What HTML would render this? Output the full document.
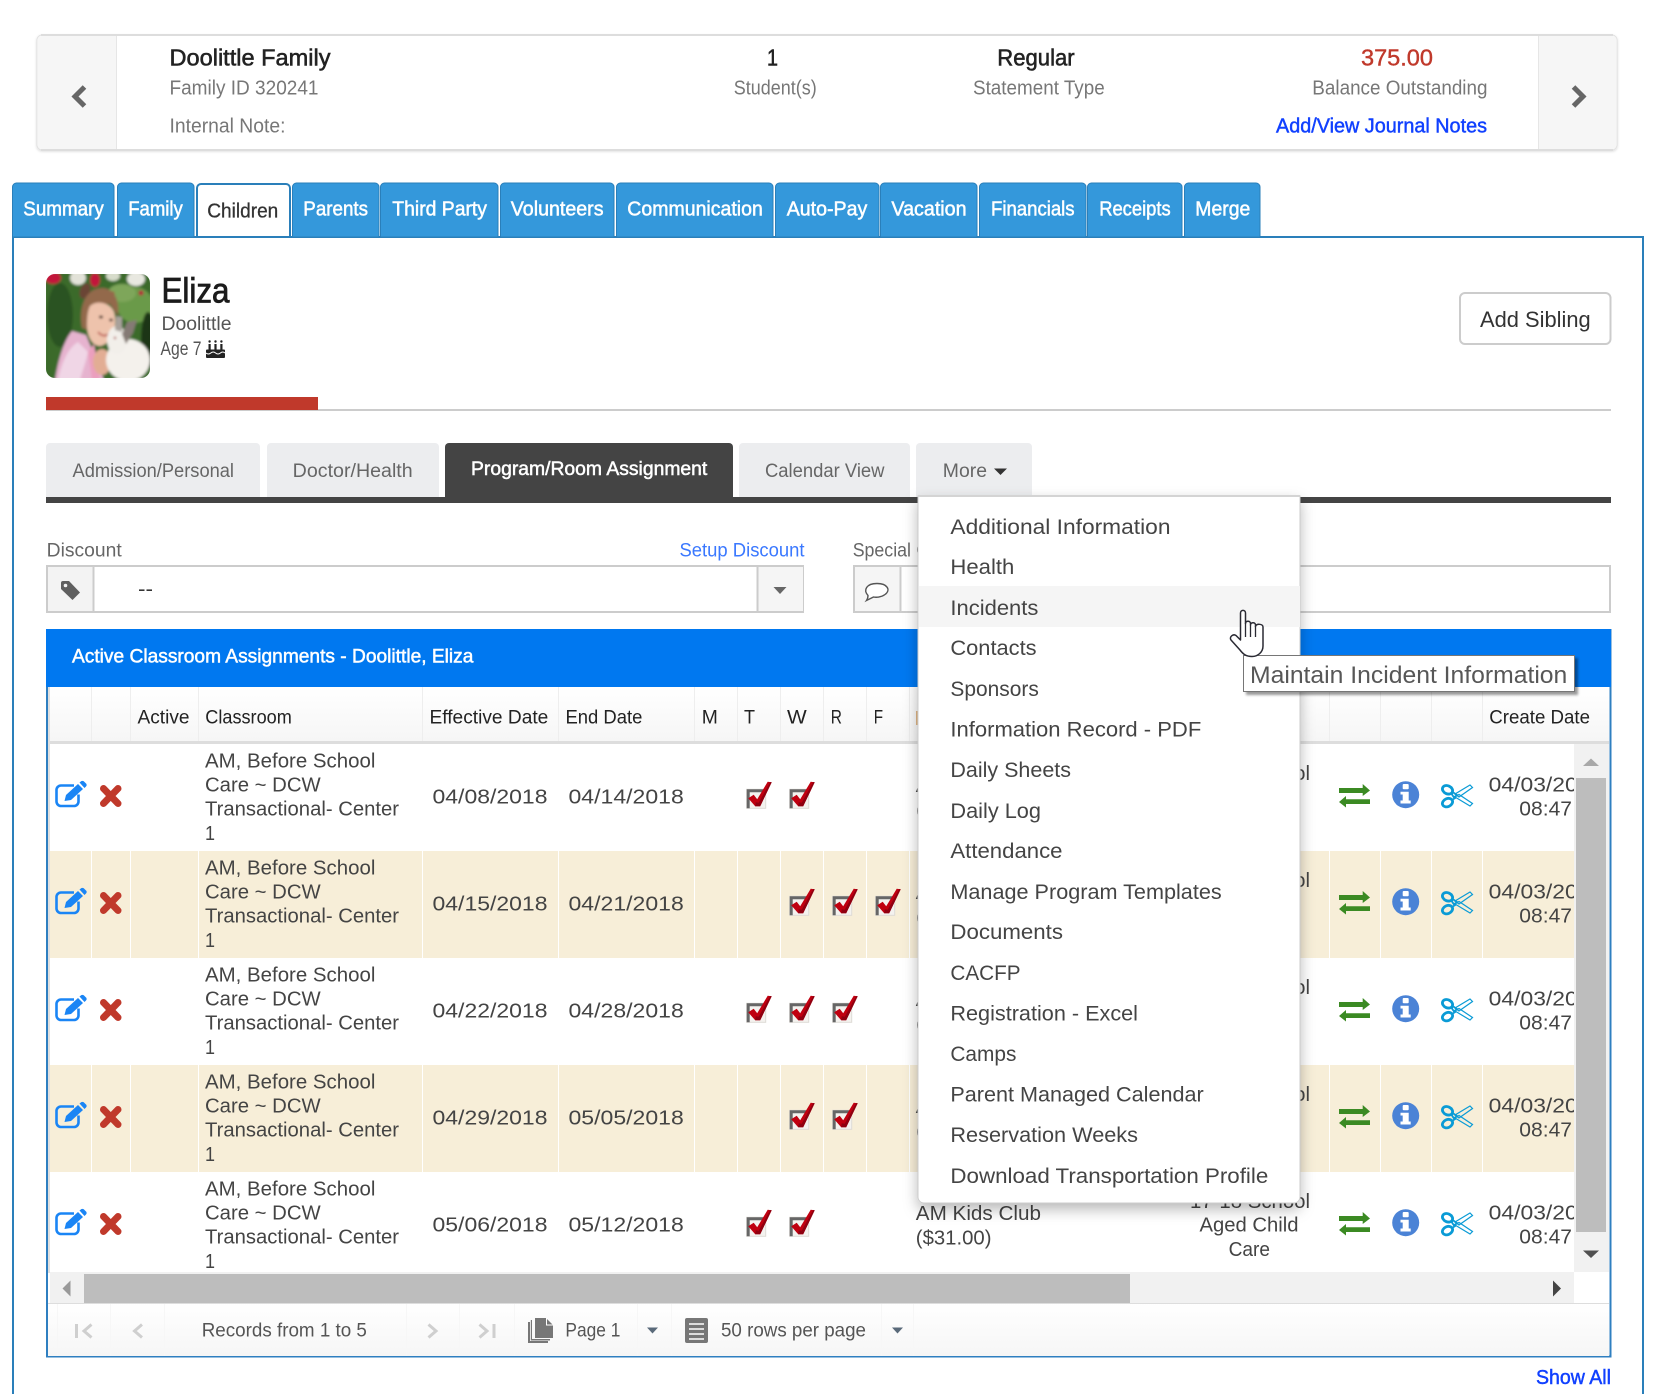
<!DOCTYPE html>
<html lang="en"><head><meta charset="utf-8"><title>Doolittle Family - Children</title>
<style>
html,body{margin:0;padding:0;background:#fff}
svg{display:block}
text{font-family:"Liberation Sans",sans-serif;white-space:pre}
.h1{font-size:23px;fill:#222;stroke:#222;stroke-width:.55}
.sub{font-size:20px;fill:#777}
.tab{font-size:20.5px;fill:#fff;stroke:#fff;stroke-width:.5}
.itab{font-size:19px;fill:#666}
.th{font-size:19px;fill:#222}
.td{font-size:20.5px;fill:#444}
.mi{font-size:21.5px;fill:#444}
.ft{font-size:19.5px;fill:#555}
.lnk{font-size:20px;fill:#1040ff;stroke:#1040ff;stroke-width:.45}
</style></head>
<body>
<svg xmlns="http://www.w3.org/2000/svg" width="1660" height="1394" viewBox="0 0 1660 1394">
<defs>
<clipPath id="av"><rect x="46" y="274" width="104" height="104" rx="9"/></clipPath>
<filter id="bl" x="-10%" y="-10%" width="120%" height="120%"><feGaussianBlur stdDeviation="1.3"/></filter>
<filter id="ms" x="-10%" y="-5%" width="120%" height="110%"><feDropShadow dx="0" dy="6" stdDeviation="7" flood-color="#000" flood-opacity=".28"/></filter>
<filter id="cs" x="-2%" y="-10%" width="104%" height="125%"><feDropShadow dx="0" dy="1" stdDeviation="1.2" flood-color="#000" flood-opacity=".15"/></filter>
<filter id="ts" x="-5%" y="-20%" width="110%" height="150%"><feDropShadow dx="3" dy="3" stdDeviation="1.2" flood-color="#000" flood-opacity=".4"/></filter>
<linearGradient id="hg" x1="0" y1="0" x2="0" y2="1"><stop offset="0" stop-color="#fff"/><stop offset="1" stop-color="#f6f6f6"/></linearGradient>
<g id="chk">
<rect x="0" y="0" width="19" height="19" fill="#f4f2ef" stroke="#dedbd6"/>
<path d="M1.500 19V1.500H19" fill="none" stroke="#666" stroke-width="3"/>
<path d="M1.500 9 7 5.500 10.500 10 21-7.500 25-7 13.500 17 8.500 17Z" fill="#c00010"/>
<path d="M8.500 17 13.500 17 25-7 23.500-7.300 12 13.500 9 13Z" fill="#8f0010"/>
</g>
<g id="edit" transform="translate(0,1.500)">
<path d="M74 784H61a4.500 4.500 0 0 0-4.500 4.500V800a4.500 4.500 0 0 0 4.500 4.500H74a4.500 4.500 0 0 0 4.500-4.500V793" fill="none" stroke="#1a85f5" stroke-width="2.600"/>
<path d="M64.500 799.500 66 793.500 78 782.500 83 787.500 71 798.500Z" fill="#1a85f5"/>
<path d="M79.500 781 81.500 779.500Q83 779 84 780L86.500 782.500Q87 784 86 785L84.500 786.500Z" fill="#1a85f5"/>
</g>
<path id="x" d="M103.500 788.500 118 803.500M118 788.500 103.500 803.500" fill="none" stroke="#c0392b" stroke-width="7" stroke-linecap="round"/>
<g id="arr" fill="#3b8a23">
<path d="M1339 788H1362.700V784L1370 790.500 1362.700 796V793H1339Z"/>
<path d="M1370 799.300H1346V796L1339 802 1346 807.500V804H1370Z"/>
</g>
<g id="info">
<circle cx="1405.700" cy="794.700" r="13.500" fill="#4b83d6"/>
<rect x="1402.700" y="784" width="6" height="5.200" rx="1" fill="#fff"/>
<path d="M1400.500 791.700H1408.700V800.500H1410.700V803.500H1400.500V800.500H1402.700V794.500H1400.500Z" fill="#fff"/>
</g>
<g id="sc" fill="none" stroke="#0a9bd6" transform="translate(1,0)">
<ellipse cx="1446.500" cy="789.800" rx="5.300" ry="4" transform="rotate(25 1446.500 789.800)" stroke-width="2.800"/>
<ellipse cx="1446.500" cy="802.600" rx="5.300" ry="4" transform="rotate(-25 1446.500 802.600)" stroke-width="2.800"/>
<path d="M1451.500 792 1456 795 1453 797.500 1451 794.500ZM1451 800 1455 797.500" stroke-width="1.800"/>
<path d="M1454 794 1469 785 1471.500 787.500 1458 797Z" stroke-width="1.200"/>
<path d="M1454 797 1458 794.500 1471.500 803.500 1469 806Z" stroke-width="1.200"/>
</g>
</defs>

<!-- family card -->
<g filter="url(#cs)">
<rect x="37" y="35" width="1580" height="115" rx="5" fill="#fff" stroke="#e2e2e2" stroke-width="1"/>
</g>
<rect x="41" y="34" width="1572" height="2" fill="#ddd"/>
<rect x="41" y="149" width="1572" height="2" fill="#ddd"/>
<path d="M116 36H41a3 3 0 0 0-3 3V146a3 3 0 0 0 3 3H116Z" fill="#f6f6f6"/>
<path d="M1538 36H1613a3 3 0 0 1 3 3V146a3 3 0 0 1-3 3H1538Z" fill="#f6f6f6"/>
<path d="M116.500 36V149M1538.500 36V149" stroke="#e6e6e6"/>
<path d="M84.500 87 75 96.500 84.500 106" fill="none" stroke="#666" stroke-width="5"/>
<path d="M1573.500 87 1583 96.500 1573.500 106" fill="none" stroke="#666" stroke-width="5"/>
<text class="h1" x="169.500" y="65.700" textLength="161" lengthAdjust="spacingAndGlyphs">Doolittle Family</text>
<text class="sub" x="169.500" y="94.700" textLength="149" lengthAdjust="spacingAndGlyphs">Family ID 320241</text>
<text class="sub" x="169.500" y="132.700" textLength="116" lengthAdjust="spacingAndGlyphs">Internal Note:</text>
<text class="h1" x="767" y="65.700" textLength="11" lengthAdjust="spacingAndGlyphs">1</text>
<text class="sub" x="733.700" y="94.700" textLength="83" lengthAdjust="spacingAndGlyphs">Student(s)</text>
<text class="h1" x="997.300" y="65.700" textLength="77.300" lengthAdjust="spacingAndGlyphs">Regular</text>
<text class="sub" x="973" y="94.700" textLength="131.700" lengthAdjust="spacingAndGlyphs">Statement Type</text>
<text class="h1" x="1361" y="65.700" textLength="72" lengthAdjust="spacingAndGlyphs" style="fill:#c0392b;stroke:#c0392b;stroke-width:.4">375.00</text>
<text class="sub" x="1312.300" y="94.700" textLength="175.200" lengthAdjust="spacingAndGlyphs">Balance Outstanding</text>
<text class="lnk" x="1276" y="132.700" textLength="211" lengthAdjust="spacingAndGlyphs">Add/View Journal Notes</text>

<!-- panel -->
<rect x="13" y="237" width="1630" height="1170" fill="#fff" stroke="#2a7fba" stroke-width="2"/>

<!-- main tabs -->
<g fill="#3498db" stroke="#2a7fba" stroke-width="1">
<path d="M12.500 237V187a4 4 0 0 1 4-4H110a4 4 0 0 1 4 4V237Z"/>
<path d="M117.500 237V187a4 4 0 0 1 4-4H190a4 4 0 0 1 4 4V237Z"/>
<path d="M292.500 237V187a4 4 0 0 1 4-4H375a4 4 0 0 1 4 4V237Z"/>
<path d="M380.500 237V187a4 4 0 0 1 4-4H494a4 4 0 0 1 4 4V237Z"/>
<path d="M500.500 237V187a4 4 0 0 1 4-4H610a4 4 0 0 1 4 4V237Z"/>
<path d="M616.500 237V187a4 4 0 0 1 4-4H769a4 4 0 0 1 4 4V237Z"/>
<path d="M775.500 237V187a4 4 0 0 1 4-4H875a4 4 0 0 1 4 4V237Z"/>
<path d="M880.500 237V187a4 4 0 0 1 4-4H973a4 4 0 0 1 4 4V237Z"/>
<path d="M979.500 237V187a4 4 0 0 1 4-4H1082a4 4 0 0 1 4 4V237Z"/>
<path d="M1087.500 237V187a4 4 0 0 1 4-4H1178a4 4 0 0 1 4 4V237Z"/>
<path d="M1184.500 237V187a4 4 0 0 1 4-4H1256a4 4 0 0 1 4 4V237Z"/>
</g>
<path d="M197 236V188a4 4 0 0 1 4-4H286a4 4 0 0 1 4 4V236" fill="#fff" stroke="#2a7fba" stroke-width="2"/>
<text class="tab" x="23.300" y="215.500" textLength="80.500" lengthAdjust="spacingAndGlyphs">Summary</text>
<text class="tab" x="128.200" y="215.500" textLength="54.600" lengthAdjust="spacingAndGlyphs">Family</text>
<text class="tab" x="207.300" y="217.500" textLength="71" lengthAdjust="spacingAndGlyphs" style="fill:#333;stroke:#333;stroke-width:.3">Children</text>
<text class="tab" x="303.300" y="215.500" textLength="64.700" lengthAdjust="spacingAndGlyphs">Parents</text>
<text class="tab" x="392.300" y="215.500" textLength="94.700" lengthAdjust="spacingAndGlyphs">Third Party</text>
<text class="tab" x="510.800" y="215.500" textLength="92.700" lengthAdjust="spacingAndGlyphs">Volunteers</text>
<text class="tab" x="627.300" y="215.500" textLength="135.500" lengthAdjust="spacingAndGlyphs">Communication</text>
<text class="tab" x="786.700" y="215.500" textLength="80.600" lengthAdjust="spacingAndGlyphs">Auto-Pay</text>
<text class="tab" x="891.400" y="215.500" textLength="75.200" lengthAdjust="spacingAndGlyphs">Vacation</text>
<text class="tab" x="991" y="215.500" textLength="83.600" lengthAdjust="spacingAndGlyphs">Financials</text>
<text class="tab" x="1099.200" y="215.500" textLength="71.500" lengthAdjust="spacingAndGlyphs">Receipts</text>
<text class="tab" x="1195.300" y="215.500" textLength="55" lengthAdjust="spacingAndGlyphs">Merge</text>

<!-- avatar -->
<g clip-path="url(#av)"><g filter="url(#bl)">
<rect x="44" y="272" width="108" height="108" fill="#3a6a2a"/>
<ellipse cx="60" cy="315" rx="13" ry="32" fill="#2c5320"/>
<ellipse cx="135" cy="305" rx="18" ry="18" fill="#6b9a48"/>
<ellipse cx="122" cy="293" rx="14" ry="9" fill="#7ea65a"/>
<ellipse cx="148" cy="340" rx="7" ry="28" fill="#1a3616"/>
<ellipse cx="53" cy="278" rx="8" ry="6" fill="#c2183a"/>
<ellipse cx="95" cy="280" rx="5" ry="7" fill="#c2183a"/>
<ellipse cx="78" cy="278" rx="8" ry="7" fill="#e2e2d8"/>
<ellipse cx="136" cy="279" rx="9" ry="7" fill="#e8e8e0"/>
<ellipse cx="113" cy="276" rx="7" ry="5" fill="#d7dccb"/>
<circle cx="141" cy="293" r="2.500" fill="#b3243a"/>
<circle cx="112" cy="294" r="2.500" fill="#a93a3a"/>
<path d="M55 380C58 360 64 340 72 331L86 335 93 352 104 380Z" fill="#e6b3cf"/>
<path d="M58 380 C62 362 68 348 78 342 L88 352 C86 362 82 372 80 380Z" fill="#f0d6e6"/>
<path d="M88 352 94 344 100 380 92 380Z" fill="#eb9fbe"/>
<ellipse cx="85" cy="291" rx="5" ry="8" fill="#6b4534" transform="rotate(20 85 291)"/>
<path d="M82 328C78 306 86 288 102 288C114 288 120 300 118 316L110 304 92 304 88 330Z" fill="#93694c"/>
<path d="M90 306C96 300 110 302 114 312C118 326 112 344 100 346C92 346 87 336 87 325C87 316 88 310 90 306Z" fill="#eec3ac"/>
<ellipse cx="101" cy="317" rx="2" ry="1.500" fill="#4a3028"/>
<ellipse cx="111" cy="320" rx="1.800" ry="1.500" fill="#4a3028"/>
<path d="M98 332Q103 338 109 334" stroke="#c26a60" stroke-width="2" fill="none"/>
<ellipse cx="102" cy="362" rx="9" ry="13" fill="#e2ad94"/>
<ellipse cx="128" cy="360" rx="22" ry="21" fill="#f4f1ec"/>
<ellipse cx="117" cy="340" rx="10" ry="14" fill="#f2efea"/>
<path d="M122 334 127 322 137 320 133 333 126 344Z" fill="#857a74"/>
<path d="M115 330 116 316 122 317 122 332Z" fill="#a9a19b"/>
<circle cx="115" cy="338" r="1.200" fill="#a44"/>
</g></g>
<text x="161.500" y="302.300" textLength="68" lengthAdjust="spacingAndGlyphs" style="font-size:35px;fill:#1b1b1b;stroke:#1b1b1b;stroke-width:.8">Eliza</text>
<text x="161.500" y="330" textLength="70" lengthAdjust="spacingAndGlyphs" style="font-size:19px;fill:#555">Doolittle</text>
<text x="160.500" y="355" textLength="41" lengthAdjust="spacingAndGlyphs" style="font-size:19px;fill:#555">Age 7</text>
<g fill="#222">
<rect x="206" y="349.500" width="19" height="8.500" rx="1"/>
<rect x="208.500" y="344" width="2.200" height="5.500"/><rect x="214.400" y="344" width="2.200" height="5.500"/><rect x="220.300" y="344" width="2.200" height="5.500"/>
<circle cx="209.600" cy="341.500" r="1.200"/><circle cx="215.500" cy="341.500" r="1.200"/><circle cx="221.400" cy="341.500" r="1.200"/>
</g>
<path d="M206 353q2.400 2 4.800 0t4.800 0 4.800 0 4.600 0" fill="none" stroke="#fff" stroke-width="1"/>

<!-- progress line -->
<rect x="46" y="409" width="1565" height="2" fill="#ccc"/>
<rect x="46" y="397" width="272" height="13" fill="#c0392b"/>

<!-- add sibling -->
<rect x="1460" y="293" width="150.500" height="51" rx="5" fill="#fff" stroke="#ccc" stroke-width="2"/>
<text x="1480" y="327" textLength="110.700" lengthAdjust="spacingAndGlyphs" style="font-size:22px;fill:#333">Add Sibling</text>

<!-- inner tabs -->
<g fill="#ecedef">
<path d="M46 497V447a4 4 0 0 1 4-4H256a4 4 0 0 1 4 4V497Z"/>
<path d="M267 497V447a4 4 0 0 1 4-4H435a4 4 0 0 1 4 4V497Z"/>
<path d="M739 497V447a4 4 0 0 1 4-4H906a4 4 0 0 1 4 4V497Z"/>
<path d="M916 497V447a4 4 0 0 1 4-4H1028a4 4 0 0 1 4 4V497Z"/>
</g>
<path d="M445 497V447a4 4 0 0 1 4-4H729a4 4 0 0 1 4 4V497Z" fill="#444"/>
<rect x="46" y="497" width="1565" height="6" fill="#444"/>
<text class="itab" x="72.500" y="477" textLength="161.500" lengthAdjust="spacingAndGlyphs">Admission/Personal</text>
<text class="itab" x="292.700" y="477" textLength="120" lengthAdjust="spacingAndGlyphs">Doctor/Health</text>
<text x="471" y="475" textLength="236.300" lengthAdjust="spacingAndGlyphs" style="font-size:19.500px;fill:#fff;stroke:#fff;stroke-width:.5">Program/Room Assignment</text>
<text class="itab" x="765" y="477" textLength="119.500" lengthAdjust="spacingAndGlyphs">Calendar View</text>
<text class="itab" x="942.800" y="477" textLength="44.200" lengthAdjust="spacingAndGlyphs">More</text>
<path d="M994 468.500H1007L1000.500 475Z" fill="#333"/>

<!-- discount -->
<text class="itab" x="46.700" y="556.300" textLength="75" lengthAdjust="spacingAndGlyphs">Discount</text>
<text x="679.500" y="556.300" textLength="125" lengthAdjust="spacingAndGlyphs" style="font-size:19px;fill:#3a78ff">Setup Discount</text>
<rect x="47" y="566" width="756" height="46" fill="#fff" stroke="#ccc" stroke-width="2"/>
<rect x="48" y="567" width="45" height="44" fill="#f3f3f3"/>
<rect x="92.500" y="566" width="2" height="46" fill="#ccc"/>
<rect x="757" y="567" width="46" height="44" fill="#f5f5f5"/>
<rect x="756.500" y="566" width="2" height="46" fill="#ccc"/>
<path d="M61 583a2 2 0 0 1 2-2H69L80 592.500 72.500 600 61 589Z" fill="#5f5f5f"/><circle cx="65.500" cy="585.500" r="1.800" fill="#f3f3f3"/>
<text x="138" y="595.500" textLength="15" lengthAdjust="spacingAndGlyphs" style="font-size:20px;fill:#333">--</text>
<path d="M773.500 587H786.500L780 594Z" fill="#666"/>
<text class="itab" x="852.700" y="556.300" textLength="58.300" lengthAdjust="spacingAndGlyphs">Special</text>
<text class="itab" x="916" y="556.300">C</text>
<rect x="854" y="566" width="756" height="46" fill="#fff" stroke="#ccc" stroke-width="2"/>
<rect x="855" y="567" width="45" height="44" fill="#f5f5f5"/>
<rect x="899.500" y="566" width="2" height="46" fill="#ccc"/>
<path d="M868 595.500C863 590 866.500 583.500 877 583.500C887.500 583.500 891 590 885 594.500C881 597.500 876 597.500 873.500 597L866.500 600.500C867.500 599 868 597.500 868 595.500Z" fill="#fff" stroke="#555" stroke-width="1.400"/>

<!-- grid -->
<rect x="47" y="630" width="1563.500" height="726.500" fill="#fff" stroke="#2f7fc0" stroke-width="2"/>
<rect x="46" y="629" width="1565" height="58" fill="#0078f0"/>
<text x="72" y="662.700" textLength="401.400" lengthAdjust="spacingAndGlyphs" style="font-size:19.500px;fill:#fff;stroke:#fff;stroke-width:.5">Active Classroom Assignments - Doolittle, Eliza</text>
<rect x="48" y="687" width="1561" height="54" fill="url(#hg)"/>
<rect x="48" y="741" width="1561" height="3" fill="#ddd"/>
<rect x="48" y="687" width="2" height="586" fill="#e0e0e0"/>
<path d="M91.500 687V741M130.500 687V741M198.500 687V741M422.500 687V741M558.500 687V741M694.500 687V741M737.500 687V741M780.500 687V741M823.500 687V741M866.500 687V741M909.500 687V741M1329.500 687V741M1380.500 687V741M1431.500 687V741M1482.500 687V741" stroke="#eee"/>
<rect x="916" y="711" width="2" height="14" fill="#e2b888"/>
<text class="th" x="137.500" y="723.700" textLength="52" lengthAdjust="spacingAndGlyphs">Active</text>
<text class="th" x="205.300" y="723.700" textLength="86.500" lengthAdjust="spacingAndGlyphs">Classroom</text>
<text class="th" x="429.500" y="723.700" textLength="118.800" lengthAdjust="spacingAndGlyphs">Effective Date</text>
<text class="th" x="565.500" y="723.700" textLength="76.900" lengthAdjust="spacingAndGlyphs">End Date</text>
<text class="th" x="701.800" y="723.700" textLength="16.100" lengthAdjust="spacingAndGlyphs">M</text>
<text class="th" x="744" y="723.700" textLength="11" lengthAdjust="spacingAndGlyphs">T</text>
<text class="th" x="787" y="723.700" textLength="19.700" lengthAdjust="spacingAndGlyphs">W</text>
<text class="th" x="830.800" y="723.700" textLength="11.200" lengthAdjust="spacingAndGlyphs">R</text>
<text class="th" x="873.700" y="723.700" textLength="9.300" lengthAdjust="spacingAndGlyphs">F</text>
<text class="th" x="1489.300" y="723.700" textLength="100.700" lengthAdjust="spacingAndGlyphs">Create Date</text>

<!-- alt rows -->
<rect x="50" y="851" width="1524" height="107" fill="#f7eed8"/>
<rect x="50" y="1065" width="1524" height="107" fill="#f7eed8"/>
<path d="M91.500 851V958M130.500 851V958M198.500 851V958M422.500 851V958M558.500 851V958M694.500 851V958M737.500 851V958M780.500 851V958M823.500 851V958M866.500 851V958M909.500 851V958M1329.500 851V958M1380.500 851V958M1431.500 851V958M1482.500 851V958M91.500 1065V1172M130.500 1065V1172M198.500 1065V1172M422.500 1065V1172M558.500 1065V1172M694.500 1065V1172M737.500 1065V1172M780.500 1065V1172M823.500 1065V1172M866.500 1065V1172M909.500 1065V1172M1329.500 1065V1172M1380.500 1065V1172M1431.500 1065V1172M1482.500 1065V1172" stroke="#fff"/>

<!-- row 1 -->
<g>
<use href="#edit"/><use href="#x"/>
<text class="td" x="205" y="767.700" textLength="170.400" lengthAdjust="spacingAndGlyphs">AM, Before School</text>
<text class="td" x="205" y="791.700" textLength="115.700" lengthAdjust="spacingAndGlyphs">Care ~ DCW</text>
<text class="td" x="205" y="815.700" textLength="194" lengthAdjust="spacingAndGlyphs">Transactional- Center</text>
<text class="td" x="205" y="840" textLength="10" lengthAdjust="spacingAndGlyphs">1</text>
<text class="td" x="432.500" y="803.700" textLength="115" lengthAdjust="spacingAndGlyphs">04/08/2018</text>
<text class="td" x="568.500" y="803.700" textLength="115.300" lengthAdjust="spacingAndGlyphs">04/14/2018</text>
<use href="#chk" x="746.700" y="789.300"/><use href="#chk" x="789.700" y="789.300"/>
<text class="td" x="915.800" y="792" textLength="125.200" lengthAdjust="spacingAndGlyphs">AM Kids Club</text>
<text class="td" x="915.800" y="816.300" textLength="75.700" lengthAdjust="spacingAndGlyphs">($31.00)</text>
<text class="td" x="1190" y="780" textLength="120" lengthAdjust="spacingAndGlyphs">17-18 School</text>
<use href="#arr"/><use href="#info"/><use href="#sc"/>
<text class="td" x="1488.700" y="791.700" textLength="114.500" lengthAdjust="spacingAndGlyphs">04/03/2018</text>
<text class="td" x="1519.300" y="815.700" textLength="52.700" lengthAdjust="spacingAndGlyphs">08:47</text>
</g>
<!-- row 2 -->
<g transform="translate(0,107)">
<use href="#edit"/><use href="#x"/>
<text class="td" x="205" y="767.700" textLength="170.400" lengthAdjust="spacingAndGlyphs">AM, Before School</text>
<text class="td" x="205" y="791.700" textLength="115.700" lengthAdjust="spacingAndGlyphs">Care ~ DCW</text>
<text class="td" x="205" y="815.700" textLength="194" lengthAdjust="spacingAndGlyphs">Transactional- Center</text>
<text class="td" x="205" y="840" textLength="10" lengthAdjust="spacingAndGlyphs">1</text>
<text class="td" x="432.500" y="803.700" textLength="115" lengthAdjust="spacingAndGlyphs">04/15/2018</text>
<text class="td" x="568.500" y="803.700" textLength="115.300" lengthAdjust="spacingAndGlyphs">04/21/2018</text>
<use href="#chk" x="789.700" y="789.300"/><use href="#chk" x="832.700" y="789.300"/><use href="#chk" x="875.700" y="789.300"/>
<text class="td" x="915.800" y="792" textLength="125.200" lengthAdjust="spacingAndGlyphs">AM Kids Club</text>
<text class="td" x="915.800" y="816.300" textLength="75.700" lengthAdjust="spacingAndGlyphs">($31.00)</text>
<text class="td" x="1190" y="780" textLength="120" lengthAdjust="spacingAndGlyphs">17-18 School</text>
<use href="#arr"/><use href="#info"/><use href="#sc"/>
<text class="td" x="1488.700" y="791.700" textLength="114.500" lengthAdjust="spacingAndGlyphs">04/03/2018</text>
<text class="td" x="1519.300" y="815.700" textLength="52.700" lengthAdjust="spacingAndGlyphs">08:47</text>
</g>
<!-- row 3 -->
<g transform="translate(0,214)">
<use href="#edit"/><use href="#x"/>
<text class="td" x="205" y="767.700" textLength="170.400" lengthAdjust="spacingAndGlyphs">AM, Before School</text>
<text class="td" x="205" y="791.700" textLength="115.700" lengthAdjust="spacingAndGlyphs">Care ~ DCW</text>
<text class="td" x="205" y="815.700" textLength="194" lengthAdjust="spacingAndGlyphs">Transactional- Center</text>
<text class="td" x="205" y="840" textLength="10" lengthAdjust="spacingAndGlyphs">1</text>
<text class="td" x="432.500" y="803.700" textLength="115" lengthAdjust="spacingAndGlyphs">04/22/2018</text>
<text class="td" x="568.500" y="803.700" textLength="115.300" lengthAdjust="spacingAndGlyphs">04/28/2018</text>
<use href="#chk" x="746.700" y="789.300"/><use href="#chk" x="789.700" y="789.300"/><use href="#chk" x="832.700" y="789.300"/>
<text class="td" x="915.800" y="792" textLength="125.200" lengthAdjust="spacingAndGlyphs">AM Kids Club</text>
<text class="td" x="915.800" y="816.300" textLength="75.700" lengthAdjust="spacingAndGlyphs">($31.00)</text>
<text class="td" x="1190" y="780" textLength="120" lengthAdjust="spacingAndGlyphs">17-18 School</text>
<use href="#arr"/><use href="#info"/><use href="#sc"/>
<text class="td" x="1488.700" y="791.700" textLength="114.500" lengthAdjust="spacingAndGlyphs">04/03/2018</text>
<text class="td" x="1519.300" y="815.700" textLength="52.700" lengthAdjust="spacingAndGlyphs">08:47</text>
</g>
<!-- row 4 -->
<g transform="translate(0,321)">
<use href="#edit"/><use href="#x"/>
<text class="td" x="205" y="767.700" textLength="170.400" lengthAdjust="spacingAndGlyphs">AM, Before School</text>
<text class="td" x="205" y="791.700" textLength="115.700" lengthAdjust="spacingAndGlyphs">Care ~ DCW</text>
<text class="td" x="205" y="815.700" textLength="194" lengthAdjust="spacingAndGlyphs">Transactional- Center</text>
<text class="td" x="205" y="840" textLength="10" lengthAdjust="spacingAndGlyphs">1</text>
<text class="td" x="432.500" y="803.700" textLength="115" lengthAdjust="spacingAndGlyphs">04/29/2018</text>
<text class="td" x="568.500" y="803.700" textLength="115.300" lengthAdjust="spacingAndGlyphs">05/05/2018</text>
<use href="#chk" x="789.700" y="789.300"/><use href="#chk" x="832.700" y="789.300"/>
<text class="td" x="915.800" y="792" textLength="125.200" lengthAdjust="spacingAndGlyphs">AM Kids Club</text>
<text class="td" x="915.800" y="816.300" textLength="75.700" lengthAdjust="spacingAndGlyphs">($31.00)</text>
<text class="td" x="1190" y="780" textLength="120" lengthAdjust="spacingAndGlyphs">17-18 School</text>
<use href="#arr"/><use href="#info"/><use href="#sc"/>
<text class="td" x="1488.700" y="791.700" textLength="114.500" lengthAdjust="spacingAndGlyphs">04/03/2018</text>
<text class="td" x="1519.300" y="815.700" textLength="52.700" lengthAdjust="spacingAndGlyphs">08:47</text>
</g>
<!-- row 5 -->
<g transform="translate(0,428)">
<use href="#edit"/><use href="#x"/>
<text class="td" x="205" y="767.700" textLength="170.400" lengthAdjust="spacingAndGlyphs">AM, Before School</text>
<text class="td" x="205" y="791.700" textLength="115.700" lengthAdjust="spacingAndGlyphs">Care ~ DCW</text>
<text class="td" x="205" y="815.700" textLength="194" lengthAdjust="spacingAndGlyphs">Transactional- Center</text>
<text class="td" x="205" y="840" textLength="10" lengthAdjust="spacingAndGlyphs">1</text>
<text class="td" x="432.500" y="803.700" textLength="115" lengthAdjust="spacingAndGlyphs">05/06/2018</text>
<text class="td" x="568.500" y="803.700" textLength="115.300" lengthAdjust="spacingAndGlyphs">05/12/2018</text>
<use href="#chk" x="746.700" y="789.300"/><use href="#chk" x="789.700" y="789.300"/>
<text class="td" x="915.800" y="792" textLength="125.200" lengthAdjust="spacingAndGlyphs">AM Kids Club</text>
<text class="td" x="915.800" y="816.300" textLength="75.700" lengthAdjust="spacingAndGlyphs">($31.00)</text>
<text class="td" x="1190" y="780" textLength="120" lengthAdjust="spacingAndGlyphs">17-18 School</text>
<text class="td" x="1199.500" y="803.700" textLength="99" lengthAdjust="spacingAndGlyphs">Aged Child</text>
<text class="td" x="1228.600" y="828" textLength="41.400" lengthAdjust="spacingAndGlyphs">Care</text>
<use href="#arr"/><use href="#info"/><use href="#sc"/>
<text class="td" x="1488.700" y="791.700" textLength="114.500" lengthAdjust="spacingAndGlyphs">04/03/2018</text>
<text class="td" x="1519.300" y="815.700" textLength="52.700" lengthAdjust="spacingAndGlyphs">08:47</text>
</g>

<!-- scrollbars -->
<rect x="1574" y="744" width="35" height="528" fill="#f1f1f1"/>
<rect x="1576" y="778" width="30" height="454" fill="#bdbdbd"/>
<path d="M1583 766H1599L1591 758.500Z" fill="#a8a8a8"/>
<path d="M1583 1250.500H1599L1591 1258Z" fill="#505050"/>
<rect x="50" y="1272" width="1524" height="31" fill="#f1f1f1"/>
<rect x="84" y="1274" width="1046" height="29" fill="#bdbdbd"/>
<rect x="1574" y="1272" width="35" height="31" fill="#fff"/>
<path d="M70.500 1280.500V1296.500L62.500 1288.500Z" fill="#999"/>
<path d="M1553 1280.500V1296.500L1561 1288.500Z" fill="#444"/>

<!-- footer -->
<rect x="48" y="1303" width="1561" height="53" fill="url(#hg)"/>
<rect x="48" y="1303" width="1561" height="1" fill="#ddd"/>
<path d="M57.500 1304V1356M110.500 1304V1356M164.500 1304V1356M406.500 1304V1356M459.500 1304V1356M514.500 1304V1356M637.500 1304V1356M671.500 1304V1356M881.500 1304V1356M913.500 1304V1356" stroke="#f7f7f7"/>
<g fill="none" stroke="#cfcfcf" stroke-width="3">
<path d="M76.500 1324V1338M91.500 1324.500 84 1331 91.500 1337.500"/>
<path d="M142 1324.500 134.500 1331 142 1337.500"/>
<path d="M428.500 1324.500 436 1331 428.500 1337.500"/>
<path d="M479.500 1324.500 487 1331 479.500 1337.500M494 1324V1338"/>
</g>
<text class="ft" x="201.700" y="1336.700" textLength="165.200" lengthAdjust="spacingAndGlyphs">Records from 1 to 5</text>
<g fill="#777">
<path d="M535 1318H546L553 1325V1338H535Z"/>
<path d="M530 1322V1341H548V1343H528V1322Z"/>
<path d="M532 1320V1339H550V1340.500H530.800V1320Z"/>
</g>
<path d="M546.500 1318V1325H553" fill="none" stroke="#fff" stroke-width="1"/>
<text class="ft" x="565.400" y="1336.700" textLength="55" lengthAdjust="spacingAndGlyphs">Page 1</text>
<path d="M647 1327.500H658L652.500 1333.500Z" fill="#5a6a7a"/>
<rect x="685" y="1318" width="23" height="25" rx="2" fill="#777"/>
<path d="M689 1324H704M689 1329H704M689 1334H704M689 1339H704" stroke="#fff" stroke-width="1.600"/>
<text class="ft" x="721" y="1336.700" textLength="145" lengthAdjust="spacingAndGlyphs">50 rows per page</text>
<path d="M892 1327.500H903L897.500 1333.500Z" fill="#5a6a7a"/>

<text class="lnk" x="1536" y="1383.800" textLength="75" lengthAdjust="spacingAndGlyphs">Show All</text>

<!-- dropdown menu -->
<g filter="url(#ms)">
<path d="M918 496H1300V1197a6 6 0 0 1-6 6H924a6 6 0 0 1-6-6Z" fill="#fff" stroke="#ccc" stroke-width="1"/>
</g>
<rect x="918" y="495" width="382" height="2" fill="#d4d4d4"/>
<rect x="919" y="586" width="381" height="41" fill="#f5f5f5"/>
<text class="mi" x="950.400" y="534" textLength="220.100" lengthAdjust="spacingAndGlyphs">Additional Information</text>
<text class="mi" x="950.400" y="574" textLength="63.900" lengthAdjust="spacingAndGlyphs">Health</text>
<text class="mi" x="950.400" y="615" textLength="88" lengthAdjust="spacingAndGlyphs">Incidents</text>
<text class="mi" x="950.400" y="655" textLength="86.200" lengthAdjust="spacingAndGlyphs">Contacts</text>
<text class="mi" x="950.400" y="696.200" textLength="88.400" lengthAdjust="spacingAndGlyphs">Sponsors</text>
<text class="mi" x="950.400" y="736.300" textLength="250.900" lengthAdjust="spacingAndGlyphs">Information Record - PDF</text>
<text class="mi" x="950.400" y="776.800" textLength="120.600" lengthAdjust="spacingAndGlyphs">Daily Sheets</text>
<text class="mi" x="950.400" y="817.900" textLength="90.600" lengthAdjust="spacingAndGlyphs">Daily Log</text>
<text class="mi" x="950.400" y="858" textLength="112.100" lengthAdjust="spacingAndGlyphs">Attendance</text>
<text class="mi" x="950.400" y="899" textLength="271.300" lengthAdjust="spacingAndGlyphs">Manage Program Templates</text>
<text class="mi" x="950.400" y="939" textLength="112.600" lengthAdjust="spacingAndGlyphs">Documents</text>
<text class="mi" x="950.400" y="979.800" textLength="70.200" lengthAdjust="spacingAndGlyphs">CACFP</text>
<text class="mi" x="950.400" y="1020.600" textLength="187.600" lengthAdjust="spacingAndGlyphs">Registration - Excel</text>
<text class="mi" x="950.400" y="1061.200" textLength="66" lengthAdjust="spacingAndGlyphs">Camps</text>
<text class="mi" x="950.400" y="1101.700" textLength="253.300" lengthAdjust="spacingAndGlyphs">Parent Managed Calendar</text>
<text class="mi" x="950.400" y="1142.200" textLength="187.600" lengthAdjust="spacingAndGlyphs">Reservation Weeks</text>
<text class="mi" x="950.400" y="1183" textLength="317.900" lengthAdjust="spacingAndGlyphs">Download Transportation Profile</text>

<!-- tooltip -->
<g filter="url(#ts)"><rect x="1243.500" y="655.500" width="331" height="36" fill="#fff" stroke="#767676"/></g>
<text x="1250" y="683" textLength="317.300" lengthAdjust="spacingAndGlyphs" style="font-size:24px;fill:#575757">Maintain Incident Information</text>

<!-- cursor -->
<path d="M1240.500 640V613C1240.500 609.500 1245.500 609.500 1245.500 613V623.500C1245.500 620.500 1250.500 620.500 1250.500 623.500V625C1250.500 622 1255.500 622 1255.500 625V626.500C1255.500 623.500 1263 623.500 1263 627V646C1263 652 1258 656.500 1252 656.500C1246 656.500 1243 654 1240 650L1231 640C1229 637 1233 633.500 1236 635.500Z" fill="#fff" stroke="#2a2a33" stroke-width="1.500" stroke-linejoin="round"/>
<path d="M1245.500 623V637M1250.500 625V637M1255.500 626V637" fill="none" stroke="#2a2a33" stroke-width="1.300"/>
</svg>
</body></html>
